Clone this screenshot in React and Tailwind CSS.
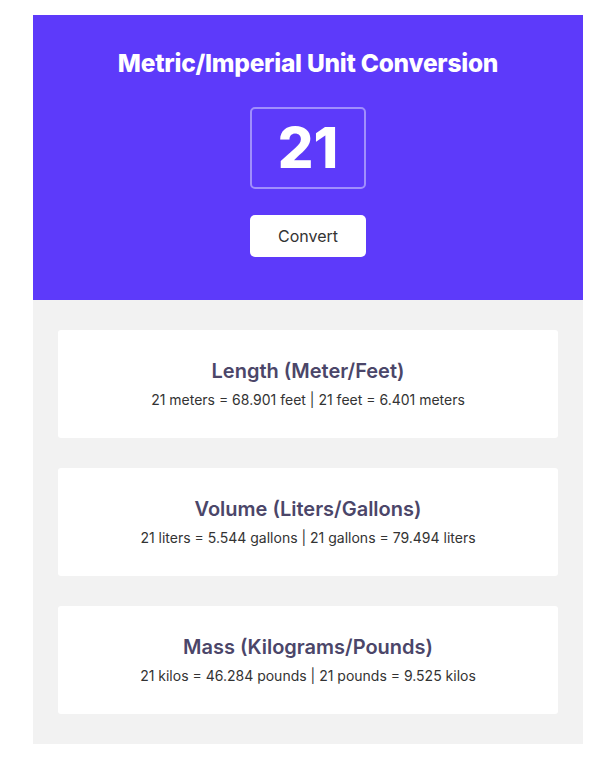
import React, { useState } from 'react';

const toFixed3 = (n) => n.toFixed(3);

const App = () => {
  const [value, setValue] = useState('21');
  const [num, setNum] = useState(21);

  const conversions = [
    {
      title: 'Length (Meter/Feet)',
      text: `${num} meters = ${toFixed3(num * 3.281)} feet | ${num} feet = ${toFixed3(num * 0.3048)} meters`,
    },
    {
      title: 'Volume (Liters/Gallons)',
      text: `${num} liters = ${toFixed3(num * 0.264)} gallons | ${num} gallons = ${toFixed3(num * 3.78541)} liters`,
    },
    {
      title: 'Mass (Kilograms/Pounds)',
      text: `${num} kilos = ${toFixed3(num * 2.204)} pounds | ${num} pounds = ${toFixed3(num * 0.453592)} kilos`,
    },
  ];

  return (
    <div className="min-h-screen bg-white pt-[15px]" style={{ fontFamily: 'Inter, "Noto Sans", sans-serif' }}>
      <div className="ml-[33px] w-[550px]">
        {/* Header */}
        <div className="bg-[#5d3afa] pt-[32px] pb-[43px] flex flex-col items-center">
          <h1 className="text-white text-[24.5px] leading-8 font-extrabold tracking-[-0.01em]">
            Metric/Imperial Unit Conversion
          </h1>
          <input
            value={value}
            onChange={(e) => setValue(e.target.value)}
            className="mt-[28px] w-[116px] h-[82px] rounded-[5px] border-2 border-[#a08efc] bg-transparent text-center text-white text-[56px] font-extrabold outline-none"
          />
          <button
            onClick={() => setNum(Number(value) || 0)}
            className="mt-[26px] w-[116px] h-[42px] rounded-[5px] bg-white text-[#333] text-[16px] font-normal"
          >
            Convert
          </button>
        </div>

        {/* Results */}
        <div className="bg-[#f2f2f2] px-[25px] py-[30px] flex flex-col gap-[30px]">
          {conversions.map((c) => (
            <div key={c.title} className="bg-white rounded-[3px] h-[108px] pt-[27px] text-center">
              <h2 className="text-[20px] leading-7 font-semibold text-[#4b4669]">{c.title}</h2>
              <p className="mt-[5px] text-[14px] leading-5 text-[#333]">{c.text}</p>
            </div>
          ))}
        </div>
      </div>
    </div>
  );
};

export default App;
